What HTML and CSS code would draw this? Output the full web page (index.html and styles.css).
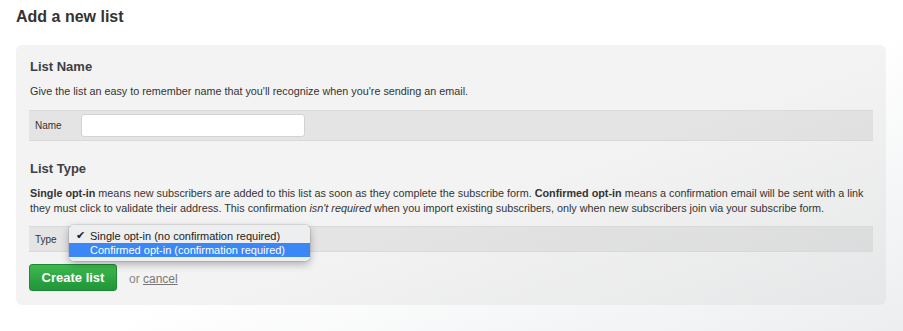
FILE: index.html
```html
<!DOCTYPE html>
<html lang="en">
<head>
    <meta charset="UTF-8">
    <meta name="viewport" content="width=device-width, initial-scale=1.0">
    <title>Add a new list</title>
    <link rel="stylesheet" href="styles.css">
</head>
<body>
    <h1 class="page-title">Add a new list</h1>

    <!-- New list form -->
    <form class="list-panel">
        <h2>List Name</h2>
        <p class="hint">Give the list an easy to remember name that you'll recognize when you're sending an email.</p>
        <div class="field-row name-row">
            <label for="list-name">Name</label>
            <input type="text" id="list-name" class="text-input">
        </div>

        <h2 class="type-heading">List Type</h2>
        <p class="hint"><strong>Single opt-in</strong> means new subscribers are added to this list as soon as they complete the subscribe form. <strong>Confirmed opt-in</strong> means a confirmation email will be sent with a link they must click to validate their address. This confirmation <em>isn't required</em> when you import existing subscribers, only when new subscribers join via your subscribe form.</p>
        <div class="field-row type-row">
            <label>Type</label>
            <div class="select-wrap">
                <!-- open popup menu -->
                <ul class="select-menu">
                    <li class="checked"><span class="check">&#10004;</span>Single opt-in (no confirmation required)</li>
                    <li class="active">Confirmed opt-in (confirmation required)</li>
                </ul>
            </div>
        </div>

        <div class="actions">
            <button type="button" class="btn-create">Create list</button>
            <span class="or">or <a href="#">cancel</a></span>
        </div>
    </form>
</body>
</html>
```

FILE: styles.css
```css
/* General body styling */
body {
    font-family: "Liberation Sans", Arial, sans-serif;
    margin: 0;
    padding: 0;
    height: 331px;
    color: #333;
    background: linear-gradient(160deg, #ffffff 55%, #eceef0 100%);
}

.page-title {
    font-size: 16px;
    line-height: 20px;
    margin: 7px 0 0 16px;
    color: #333;
}

/* Panel */
.list-panel {
    width: 844px;
    margin: 18px 0 0 16px;
    padding: 14px 13px 14px 13px;
    border-radius: 6px;
    background: linear-gradient(160deg, #f3f3f3 55%, #e6e7e8 100%);
}

.list-panel h2 {
    font-size: 13px;
    line-height: 16px;
    margin: 0 0 0 1px;
    color: #3b3f47;
}

.list-panel .type-heading {
    margin-top: 20px;
}

.hint {
    font-size: 10.8px;
    line-height: 15px;
    margin: 9px 0 0 1px;
    color: #333;
}

/* Field rows */
.field-row {
    display: flex;
    align-items: center;
    background-color: rgba(0, 0, 0, 0.06);
    border-top: 1px solid #d9d9d9;
    border-bottom: 1px solid #d9d9d9;
    padding: 0 6px;
}

.field-row label {
    font-size: 10px;
    color: #333;
    width: 46px;
}

.name-row {
    height: 29px;
    margin-top: 11px;
}

.text-input {
    width: 220px;
    height: 19px;
    border: 1px solid #d3d3d3;
    border-radius: 3px;
    background: #fff;
    padding: 1px;
    margin: 0;
}

.type-row {
    height: 24px;
    margin-top: 10px;
}

.type-row label {
    width: 34px;
}

/* Open select popup */
.select-wrap {
    position: relative;
    height: 24px;
}

.select-menu {
    position: absolute;
    top: -2px;
    left: 0;
    width: 241px;
    list-style: none;
    margin: 0;
    padding: 4px 0;
    border-radius: 5px;
    background: rgba(236, 237, 239, 0.97);
    box-shadow: 0 3px 9px rgba(0, 0, 0, 0.3), 0 0 0 1px rgba(0, 0, 0, 0.08);
    font-size: 11px;
    line-height: 14px;
    color: #222;
}

.select-menu li {
    position: relative;
    padding-left: 21px;
}

.select-menu .check {
    position: absolute;
    left: 7px;
    top: 0;
    font-size: 11px;
    font-family: "DejaVu Sans", sans-serif;
    color: #222;
}

.select-menu .active {
    background-color: #3b87f6;
    color: #fff;
}

/* Buttons */
.actions {
    display: flex;
    align-items: center;
    margin-top: 12px;
}

.btn-create {
    width: 88px;
    height: 27px;
    border: 1px solid #1c8a33;
    border-radius: 3px;
    background: linear-gradient(#3fb94f, #1f9538);
    color: #fff;
    font-family: "Liberation Sans", Arial, sans-serif;
    font-size: 13px;
    font-weight: bold;
    padding: 0;
}

.or {
    font-size: 12px;
    color: #888;
    margin: 3px 0 0 12px;
}

.or a {
    color: #777;
}
```
